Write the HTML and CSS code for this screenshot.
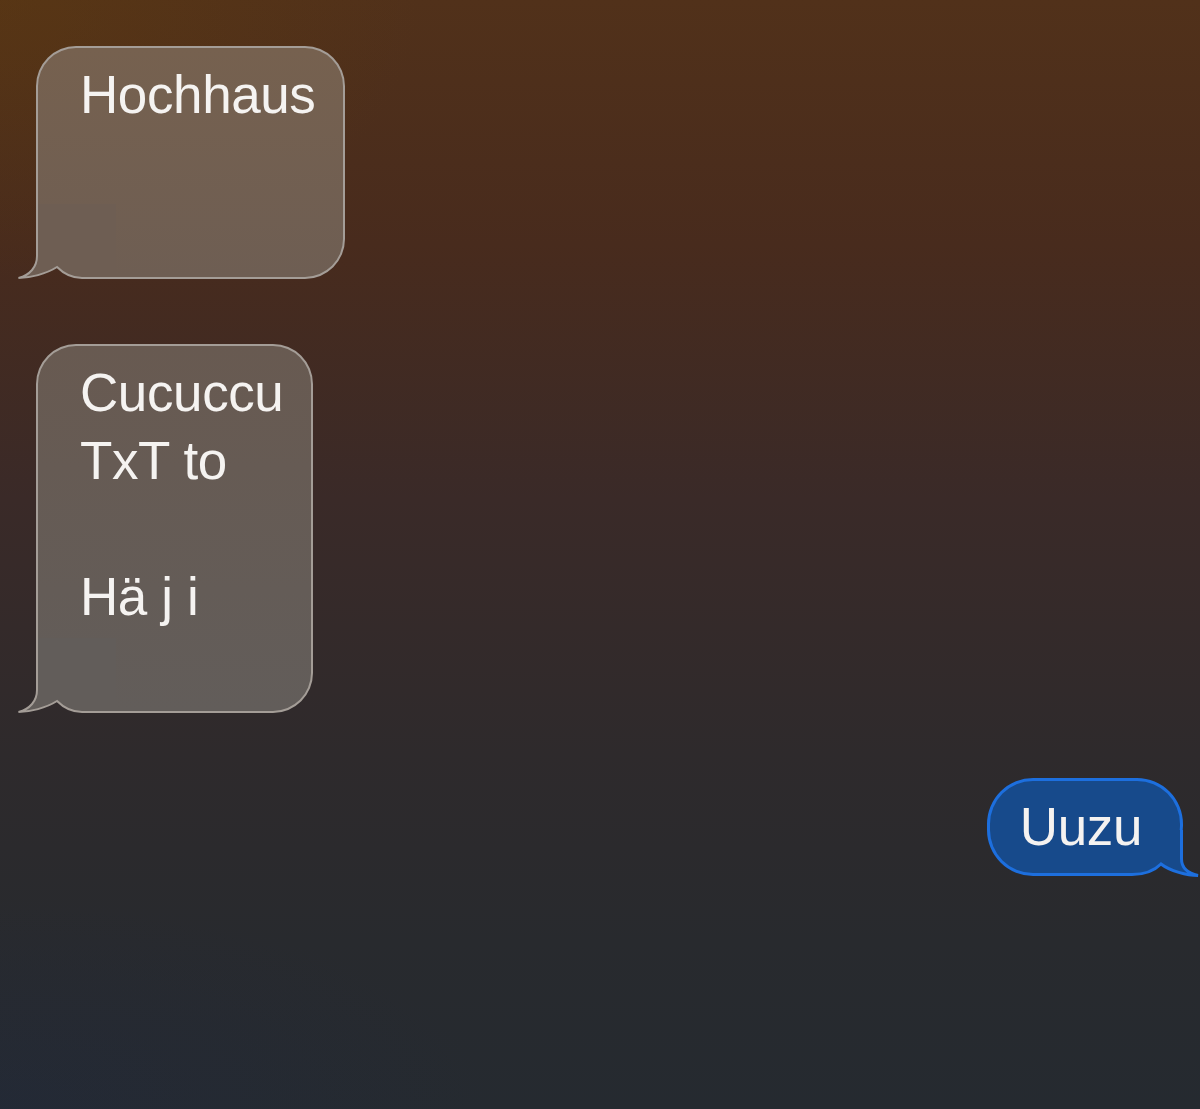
FILE: index.html
```html
<!DOCTYPE html>
<html lang="de">
<head>
    <meta charset="UTF-8">
    <meta name="viewport" content="width=device-width, initial-scale=1.0">
    <title>Nachrichten</title>
    <link rel="stylesheet" href="styles.css">
</head>
<body>
    <div class="chat">
        <div class="bubble incoming first">
            <div class="text">Hochhaus<br><br>&nbsp;</div>
            <svg class="tail" width="100" height="75" viewBox="0 0 100 75">
                <path class="tail-fill" d="M21 0 L21 52 C21 63 14 71 2.5 74 C14 74 30 70 41 63 C48 70 56 74 66 74 L100 74 L100 0 Z"/>
                <path class="tail-line" d="M21 0 L21 52 C21 63 14 71 2.5 74 C14 74 30 70 41 63 C48 70 56 74 66 74 L100 74"/>
            </svg>
        </div>

        <div class="bubble incoming second">
            <div class="text">Cucuccu<br>TxT to<br><br>Hä j i<br>&nbsp;</div>
            <svg class="tail" width="100" height="75" viewBox="0 0 100 75">
                <path class="tail-fill" d="M21 0 L21 52 C21 63 14 71 2.5 74 C14 74 30 70 41 63 C48 70 56 74 66 74 L100 74 L100 0 Z"/>
                <path class="tail-line" d="M21 0 L21 52 C21 63 14 71 2.5 74 C14 74 30 70 41 63 C48 70 56 74 66 74 L100 74"/>
            </svg>
        </div>

        <div class="bubble outgoing">
            <div class="text">Uuzu</div>
            <svg class="tail" width="90" height="60" viewBox="0 0 90 60">
                <path class="tail-fill" d="M71.5 14 L71.5 43 C71.5 52 77 57 88 59.5 C77 59.5 60 55 51 48 C44 55 36 58.5 22 58.5 L0 58.5 L0 14 Z"/>
                <path class="tail-line" d="M71.5 14 L71.5 43 C71.5 52 77 57 88 59.5 C77 59.5 60 55 51 48 C44 55 36 58.5 22 58.5 L0 58.5"/>
            </svg>
        </div>
    </div>
</body>
</html>
```

FILE: styles.css
```css
html, body {
    margin: 0;
    padding: 0;
}
body {
    font-family: 'Liberation Sans', Arial, sans-serif;
    height: 1109px;
    overflow: hidden;
    background:
        radial-gradient(ellipse 700px 300px at 0% 100%, rgba(30, 40, 70, 0.25), rgba(30, 40, 70, 0) 70%),
        radial-gradient(ellipse 600px 400px at 0% 0%, rgba(100, 62, 10, 0.35), rgba(100, 62, 10, 0) 70%),
        linear-gradient(180deg, #51311a 0%, #482b1d 22%, #3a2a28 45%, #2e2a2c 68%, #282a2e 85%, #252a30 100%);
    color: #f5f3f1;
}
.chat {
    display: flex;
    flex-direction: column;
    gap: 65px;
    padding: 46px 17px 0 36px;
}
.bubble {
    position: relative;
    box-sizing: border-box;
    font-size: 53px;
    line-height: 68px;
    letter-spacing: -0.4px;
}
.bubble .text {
    position: relative;
    z-index: 1;
    white-space: nowrap;
}
.incoming {
    align-self: flex-start;
    border: 2px solid #a49d97;
    border-radius: 40px;
    border-bottom-left-radius: 64px 56px;
    padding: 13px 28px 12px 42px;
}
.first {
    background: linear-gradient(180deg, #76614f, #6e5e53);
}
.second {
    background: linear-gradient(180deg, #685a51, #625d5a);
}
.outgoing {
    align-self: flex-end;
    border: 3px solid #1d6fde;
    border-radius: 46px;
    border-bottom-right-radius: 72px 50px;
    background: #174a8b;
    padding: 12px 38px 12px 30px;
}
.tail {
    position: absolute;
    overflow: visible;
}
.incoming .tail {
    left: -22px;
    bottom: -2px;
}
.outgoing .tail {
    right: -20px;
    bottom: -3px;
}
.incoming .tail-line {
    fill: none;
    stroke: #a49d97;
    stroke-width: 2;
}
.first .tail-fill {
    fill: #6e5e53;
}
.second .tail-fill {
    fill: #625d5a;
}
.outgoing .tail-fill {
    fill: #174a8b;
}
.outgoing .tail-line {
    fill: none;
    stroke: #1d6fde;
    stroke-width: 3;
}
```
